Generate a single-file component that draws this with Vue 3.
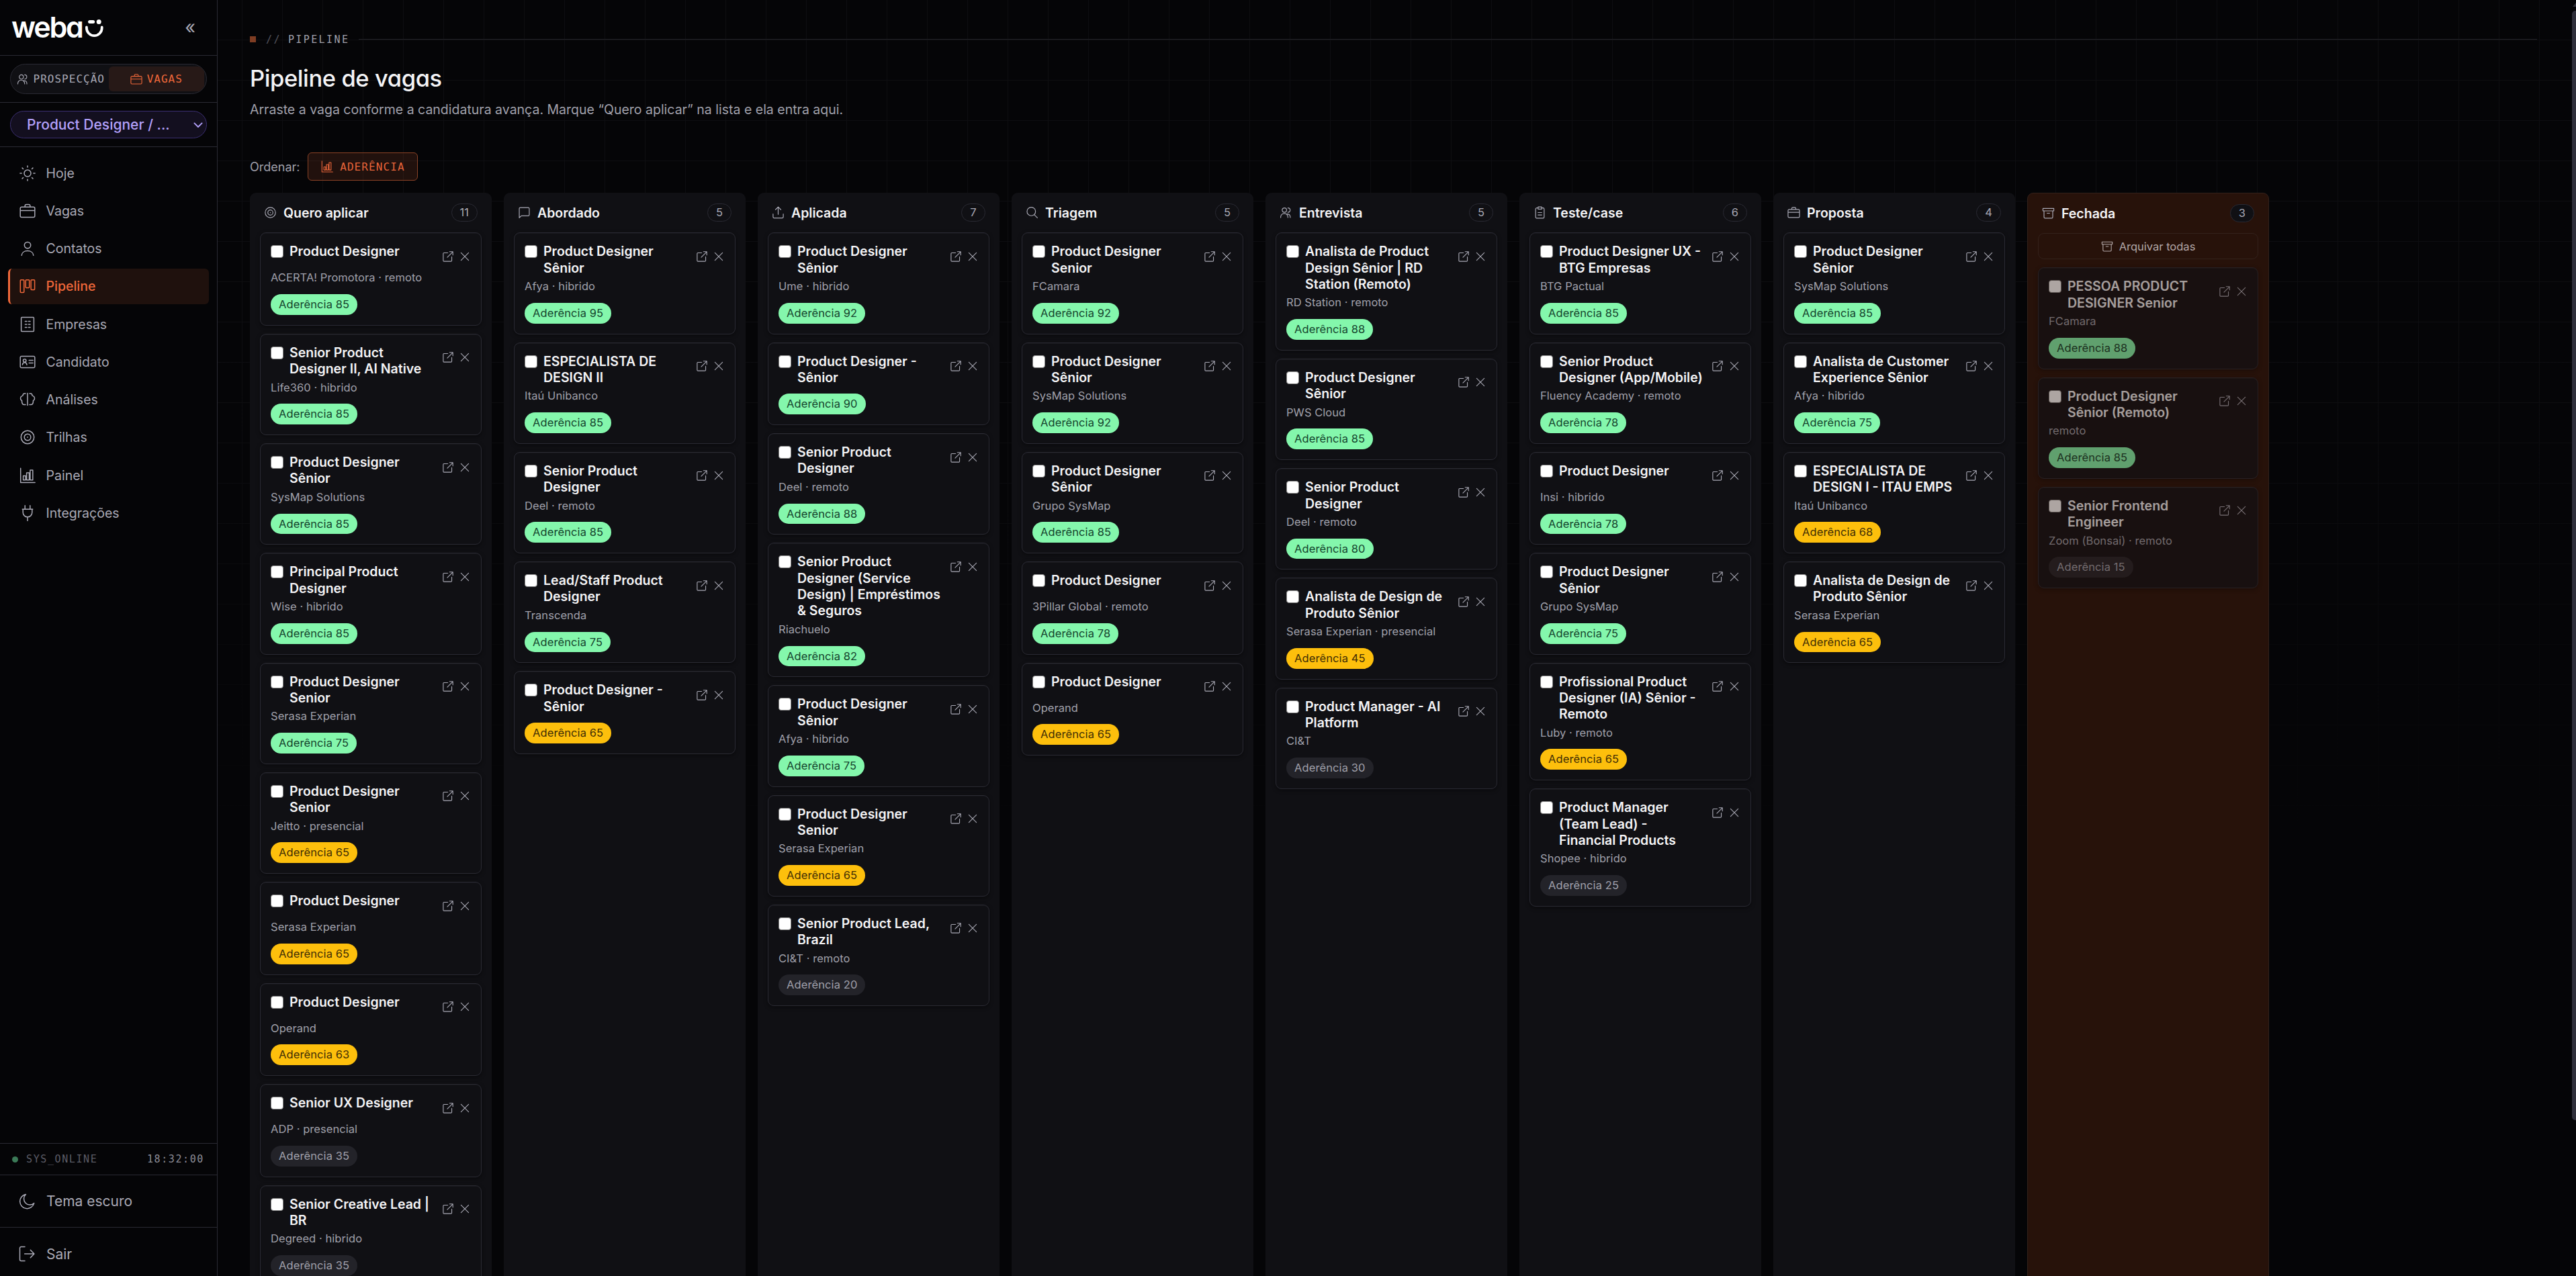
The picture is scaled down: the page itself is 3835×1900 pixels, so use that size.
<script setup>
import { ref } from "vue"

const icons = {
    sun: "M12 7a5 5 0 1 0 0 10 5 5 0 0 0 0-10zM12 .9v2.2M12 20.9v2.2M.9 12h2.2M20.9 12h2.2M4.1 4.1l1.4 1.4M18.5 18.5l1.4 1.4M4.1 19.9l1.4-1.4M18.5 5.5l1.4-1.4",
    briefcase: "M3.2 6.2h17.6a2 2 0 0 1 2 2v11.2a2 2 0 0 1-2 2H3.2a2 2 0 0 1-2-2V8.2a2 2 0 0 1 2-2zM1.2 11.6h21.6M8.2 6.2V4.4a2 2 0 0 1 2-2h3.6a2 2 0 0 1 2 2v1.8",
    user: "M12 2.4a4.7 4.7 0 1 0 0 9.4 4.7 4.7 0 0 0 0-9.4zM3.2 22.2c.3-3.8 3.6-6.6 8.8-6.6s8.5 2.8 8.8 6.6",
    kanban: "M2.3 2.7h3.5a1 1 0 0 1 1 1v16.8a1 1 0 0 1-1 1H2.3a1 1 0 0 1-1-1V3.7a1 1 0 0 1 1-1zM10.2 2.7h3.5a1 1 0 0 1 1 1v9.8a1 1 0 0 1-1 1h-3.5a1 1 0 0 1-1-1V3.7a1 1 0 0 1 1-1zM18.1 2.7h3.5a1 1 0 0 1 1 1v12.8a1 1 0 0 1-1 1h-3.5a1 1 0 0 1-1-1V3.7a1 1 0 0 1 1-1z",
    building: "M3.6 1.4h16.8a1 1 0 0 1 1 1v19.2a1 1 0 0 1-1 1H3.6a1 1 0 0 1-1-1V2.4a1 1 0 0 1 1-1zM8.4 7.6h2.6M13.4 7.6H16M8.4 12.1h2.6M13.4 12.1H16M8.4 16.6h2.6M13.4 16.6H16",
    idcard: "M3 3.4h18a1.8 1.8 0 0 1 1.8 1.8v13.6a1.8 1.8 0 0 1-1.8 1.8H3a1.8 1.8 0 0 1-1.8-1.8V5.2A1.8 1.8 0 0 1 3 3.4zM7.7 7.8a2.2 2.2 0 1 0 0 4.4 2.2 2.2 0 0 0 0-4.4zM4.4 16.2c.3-2.2 1.5-3.4 3.3-3.4s3 1.2 3.3 3.4M14.2 9.6h6M14.2 13.4h6",
    brain: "M12 2.6v18M9 3H7.6C5.9 3 5 4.4 5 6.1 3 6.7 1.5 8 1.5 10.2c0 1.5.7 2.6 2 3.2C3.5 17 4.5 19.6 7 19.6h2M15 3h1.4C18.1 3 19 4.4 19 6.1c2 .6 3.5 1.9 3.5 4.1 0 1.5-.7 2.6-2 3.2 0 3.6-1 6.2-3.5 6.2h-2",
    target: "M12 2.3a9.7 9.7 0 1 0 0 19.4 9.7 9.7 0 0 0 0-19.4zM12 7.2a4.8 4.8 0 1 0 0 9.6 4.8 4.8 0 0 0 0-9.6zM12 11.7v.6",
    chart: "M1.7 1.2v21.4h21.4M5.6 12.6h3.6v6.2H5.6zM10.6 8h3.9v10.8h-3.9zM15.9 4h3.9v14.8h-3.9z",
    plug: "M8.2.8v5.2M15.8.8v5.2M4.3 6.2h15.4M5.2 6.2v4.7c0 4 3 6.9 6.8 6.9s6.8-2.9 6.8-6.9V6.2M12 17.8v5.6",
    moon: "M10.4 1.4A10.7 10.7 0 1 0 22.7 14.6 8.9 8.9 0 0 1 10.4 1.4z",
    logout: "M9 1.5H3.5a2 2 0 0 0-2 2v17a2 2 0 0 0 2 2H9M8.6 12h14M17.3 6.3 22.9 12l-5.6 5.7",
    users: "M9 3.2a4.2 4.2 0 1 0 0 8.4 4.2 4.2 0 0 0 0-8.4zM2 21.4v-.9a6.8 6.8 0 0 1 13.6 0v.9M15.6 3.2a4.2 4.2 0 0 1 0 8.4M13.6 14.6c4 0 6.4 2.6 6.4 5.9v.9",
    chat: "M2.6 21.8V4.6a2 2 0 0 1 2-2h14.8a2 2 0 0 1 2 2v11.6a2 2 0 0 1-2 2H6.5z",
    upload: "M12 15.4V1.8M6.9 6.6 12 1.5l5.1 5.1M2.4 14.5v5.8a2 2 0 0 0 2 2h15.2a2 2 0 0 0 2-2v-5.8",
    search: "M10.5 2a8 8 0 1 0 0 16 8 8 0 0 0 0-16zM16.3 16.3l5.7 5.7",
    clipboard: "M8.5 3.4H6a2 2 0 0 0-2 2v15.2a2 2 0 0 0 2 2h12a2 2 0 0 0 2-2V5.4a2 2 0 0 0-2-2h-2.5M8.7 1.4h6.6v4.2H8.7zM8.5 12h7M8.5 16.5h7",
    archive: "M1.8 3h20.4v4.6H1.8zM3.8 7.6v11.8a2 2 0 0 0 2 2h12.4a2 2 0 0 0 2-2V7.6M9.6 12h4.8",
    external: "M11.5 4.6H4a1.5 1.5 0 0 0-1.5 1.5V20A1.5 1.5 0 0 0 4 21.5h13.9a1.5 1.5 0 0 0 1.5-1.5v-7.5M15 2.4h6.6V9M21.3 2.7 10.6 13.4",
    close: "M4.5 4.5l15 15M19.5 4.5l-15 15",
    chevron: "M4.5 8.5l7.5 7.5 7.5-7.5",
}

const nav = [
    { label: "Hoje", icon: "sun" },
    { label: "Vagas", icon: "briefcase" },
    { label: "Contatos", icon: "user" },
    { label: "Pipeline", icon: "kanban" },
    { label: "Empresas", icon: "building" },
    { label: "Candidato", icon: "idcard" },
    { label: "Análises", icon: "brain" },
    { label: "Trilhas", icon: "target" },
    { label: "Painel", icon: "chart" },
    { label: "Integrações", icon: "plug" },
]

const active = ref("Pipeline")

const job = (title, meta, score) => ({ title, meta, score })

const columns = ref([
    {
        name: "Quero aplicar", icon: "target", total: 11,
        jobs: [
            job("Product Designer", "ACERTA! Promotora · remoto", 85),
            job("Senior Product Designer II, AI Native", "Life360 · hibrido", 85),
            job("Product Designer Sênior", "SysMap Solutions", 85),
            job("Principal Product Designer", "Wise · hibrido", 85),
            job("Product Designer Senior", "Serasa Experian", 75),
            job("Product Designer Senior", "Jeitto · presencial", 65),
            job("Product Designer", "Serasa Experian", 65),
            job("Product Designer", "Operand", 63),
            job("Senior UX Designer", "ADP · presencial", 35),
            job("Senior Creative Lead | BR", "Degreed · hibrido", 35),
        ],
    },
    {
        name: "Abordado", icon: "chat", total: 5,
        jobs: [
            job("Product Designer Sênior", "Afya · hibrido", 95),
            job("ESPECIALISTA DE DESIGN II", "Itaú Unibanco", 85),
            job("Senior Product Designer", "Deel · remoto", 85),
            job("Lead/Staff Product Designer", "Transcenda", 75),
            job("Product Designer - Sênior", "", 65),
        ],
    },
    {
        name: "Aplicada", icon: "upload", total: 7,
        jobs: [
            job("Product Designer Sênior", "Ume · hibrido", 92),
            job("Product Designer - Sênior", "", 90),
            job("Senior Product Designer", "Deel · remoto", 88),
            job("Senior Product Designer (Service Design) | Empréstimos & Seguros", "Riachuelo", 82),
            job("Product Designer Sênior", "Afya · hibrido", 75),
            job("Product Designer Senior", "Serasa Experian", 65),
            job("Senior Product Lead, Brazil", "CI&T · remoto", 20),
        ],
    },
    {
        name: "Triagem", icon: "search", total: 5,
        jobs: [
            job("Product Designer Senior", "FCamara", 92),
            job("Product Designer Sênior", "SysMap Solutions", 92),
            job("Product Designer Sênior", "Grupo SysMap", 85),
            job("Product Designer", "3Pillar Global · remoto", 78),
            job("Product Designer", "Operand", 65),
        ],
    },
    {
        name: "Entrevista", icon: "users", total: 5,
        jobs: [
            job("Analista de Product Design Sênior | RD Station (Remoto)", "RD Station · remoto", 88),
            job("Product Designer Sênior", "PWS Cloud", 85),
            job("Senior Product Designer", "Deel · remoto", 80),
            job("Analista de Design de Produto Sênior", "Serasa Experian · presencial", 45),
            job("Product Manager - AI Platform", "CI&T", 30),
        ],
    },
    {
        name: "Teste/case", icon: "clipboard", total: 6,
        jobs: [
            job("Product Designer UX - BTG Empresas", "BTG Pactual", 85),
            job("Senior Product Designer (App/Mobile)", "Fluency Academy · remoto", 78),
            job("Product Designer", "Insi · hibrido", 78),
            job("Product Designer Sênior", "Grupo SysMap", 75),
            job("Profissional Product Designer (IA) Sênior - Remoto", "Luby · remoto", 65),
            job("Product Manager (Team Lead) - Financial Products", "Shopee · hibrido", 25),
        ],
    },
    {
        name: "Proposta", icon: "briefcase", total: 4,
        jobs: [
            job("Product Designer Sênior", "SysMap Solutions", 85),
            job("Analista de Customer Experience Sênior", "Afya · hibrido", 75),
            job("ESPECIALISTA DE DESIGN I - ITAU EMPS", "Itaú Unibanco", 68),
            job("Analista de Design de Produto Sênior", "Serasa Experian", 65),
        ],
    },
    {
        name: "Fechada", icon: "archive", total: 3, closed: true,
        jobs: [
            job("PESSOA PRODUCT DESIGNER Senior", "FCamara", 88),
            job("Product Designer Sênior (Remoto)", "remoto", 85),
            job("Senior Frontend Engineer", "Zoom (Bonsai) · remoto", 15),
        ],
    },
])

const scoreClass = (score) => {
    if (score >= 70) return "high"
    if (score >= 40) return "mid"
    return "low"
}

const removeJob = (column, index) => {
    column.jobs.splice(index, 1)
    column.total--
}

const archiveAll = (column) => {
    column.jobs = []
    column.total = 0
}
</script>

<template>
    <div class="app">
        <!-- SIDEBAR -->
        <aside class="sidebar">
            <div class="brand">
                <div class="logo">
                    <span class="logo-text">weba</span>
                    <svg class="logo-smile" viewBox="0 0 27 26">
                        <path d="M1.9 11.5v1.2a11.4 11.4 0 0 0 22.8 0v-1.2" />
                        <path d="M6.6 3.5h5" class="eye" />
                        <circle cx="20.200" cy="3.500" r="3.500" />
                    </svg>
                </div>
                <button class="collapse">«</button>
            </div>

            <div class="block">
                <div class="segment">
                    <button>
                        <svg class="icon" viewBox="0 0 24 24"><path :d="icons.users" /></svg>PROSPECÇÃO
                    </button>
                    <button class="on">
                        <svg class="icon" viewBox="0 0 24 24"><path :d="icons.briefcase" /></svg>VAGAS
                    </button>
                </div>
            </div>

            <div class="block">
                <div class="profile">
                    <span>Product Designer / ...</span>
                    <svg class="icon" viewBox="0 0 24 24"><path :d="icons.chevron" /></svg>
                </div>
            </div>

            <nav class="nav">
                <a
                    v-for="item in nav"
                    :key="item.label"
                    :class="{ active: item.label === active }"
                    @click="active = item.label"
                >
                    <svg class="icon" viewBox="0 0 24 24"><path :d="icons[item.icon]" /></svg>
                    {{ item.label }}
                </a>
            </nav>

            <div class="status">
                <i class="dot"></i>
                <span>SYS_ONLINE</span>
                <time>18:32:00</time>
            </div>
            <div class="foot theme">
                <svg class="icon" viewBox="0 0 24 24"><path :d="icons.moon" /></svg>Tema escuro
            </div>
            <div class="foot exit">
                <svg class="icon" viewBox="0 0 24 24"><path :d="icons.logout" /></svg>Sair
            </div>
        </aside>

        <!-- CONTENT -->
        <main class="main">
            <div class="crumb">
                <i></i><span class="slashes">//</span><span>PIPELINE</span><hr />
            </div>
            <h1>Pipeline de vagas</h1>
            <p class="lead">Arraste a vaga conforme a candidatura avança. Marque “Quero aplicar” na lista e ela entra aqui.</p>

            <div class="toolbar">
                <span>Ordenar:</span>
                <button class="sort">
                    <svg class="icon" viewBox="0 0 24 24"><path :d="icons.chart" /></svg>ADERÊNCIA
                </button>
            </div>

            <div class="board">
                <section v-for="column in columns" :key="column.name" class="column" :class="{ closed: column.closed }">
                    <header>
                        <svg class="icon" viewBox="0 0 24 24"><path :d="icons[column.icon]" /></svg>
                        <h2>{{ column.name }}</h2>
                        <span class="count">{{ column.total }}</span>
                    </header>

                    <button v-if="column.closed" class="archive" @click="archiveAll(column)">
                        <svg class="icon" viewBox="0 0 24 24"><path :d="icons.archive" /></svg>Arquivar todas
                    </button>

                    <article v-for="(item, i) in column.jobs" :key="i" class="card">
                        <div class="card-top">
                            <input type="checkbox" />
                            <h3>{{ item.title }}</h3>
                            <div class="actions">
                                <svg class="icon" viewBox="0 0 24 24"><path :d="icons.external" /></svg>
                                <svg class="icon" viewBox="0 0 24 24" @click="removeJob(column, i)"><path :d="icons.close" /></svg>
                            </div>
                        </div>
                        <p v-if="item.meta" class="meta">{{ item.meta }}</p>
                        <span class="score" :class="scoreClass(item.score)">Aderência {{ item.score }}</span>
                    </article>
                </section>
            </div>
        </main>

        <div class="scrollbar"><i></i><b></b></div>
    </div>
</template>

<style>
html,
body {
    background: #050507;
    overflow: hidden;
}
</style>

<style scoped>
* {
    box-sizing: border-box;
}

.app {
    position: relative;
    display: flex;
    height: 1900px;
    overflow: hidden;
    background: #050507;
    color: #f4f4f6;
    font-family: Inter, sans-serif;
    font-size: 19.5px;
}

button {
    font: inherit;
    letter-spacing: inherit;
    color: inherit;
    background: none;
    border: 0;
    padding: 0;
    cursor: pointer;
}

.icon {
    width: 24px;
    height: 24px;
    flex: none;
    fill: none;
    stroke: currentColor;
    stroke-width: 1.5;
    stroke-linecap: round;
    stroke-linejoin: round;
}

/* SIDEBAR */
.sidebar {
    width: 324px;
    flex: none;
    display: flex;
    flex-direction: column;
    border-right: 1px solid #2a2a33;
    color: #a9a9b5;
}

.brand {
    height: 83px;
    padding: 0 32px 0 17px;
    display: flex;
    align-items: center;
    justify-content: space-between;
    border-bottom: 1px solid #2a2a33;
}

.logo {
    display: flex;
    align-items: flex-end;
    color: #fff;
}

.logo-text {
    font-size: 43px;
    line-height: 42px;
    height: 44px;
    font-weight: 600;
    letter-spacing: -2.2px;
    font-feature-settings: "cv11";
}

.logo-smile {
    width: 27px;
    height: 26px;
    margin: 0 0 8px 4px;
    fill: none;
    stroke: #fff;
    stroke-width: 3.8;
    stroke-linecap: round;
}

.logo-smile circle {
    fill: #fff;
    stroke: none;
}

.logo-smile .eye {
    stroke-width: 5;
}

.collapse {
    font-size: 27px;
    line-height: 24px;
}

.block {
    padding: 12px 15px;
    border-bottom: 1px solid #2a2a33;
}

.segment {
    height: 45px;
    padding: 3px;
    display: flex;
    border: 1px solid #2a2a33;
    border-radius: 23px;
    background: #101014;
    font-family: "DejaVu Sans Mono", monospace;
    font-size: 16px;
    letter-spacing: 1px;
    overflow: hidden;
}

.segment button {
    flex: 1 1 0;
    display: flex;
    align-items: center;
    justify-content: center;
    gap: 7px;
    border-radius: 6px;
}

.segment .icon {
    width: 18px;
    height: 18px;
}

.segment .on {
    background: #271917;
    color: #f0683a;
}

.profile {
    height: 41px;
    padding: 0 3px 0 24px;
    display: flex;
    align-items: center;
    justify-content: space-between;
    border: 1px solid #3b2f72;
    border-radius: 21px;
    background: #130f1f;
    color: #b3a1fb;
    font-size: 21px;
    font-weight: 500;
}

.profile .icon {
    width: 18px;
    height: 18px;
    stroke-width: 2.4;
}

.nav {
    flex: 1;
    padding: 12px;
    display: flex;
    flex-direction: column;
    gap: 3px;
}

.nav a {
    height: 53.25px;
    padding-left: 13.5px;
    display: flex;
    align-items: center;
    gap: 16px;
    border-left: 3px solid transparent;
    border-radius: 6px;
    cursor: pointer;
}

.nav a.active {
    background: #1f110d;
    border-left-color: #f0683a;
    color: #f0683a;
    font-weight: 500;
}

.status {
    height: 47px;
    padding: 0 19px 0 18px;
    display: flex;
    align-items: center;
    border-top: 1px solid #2a2a33;
    font-family: "DejaVu Sans Mono", monospace;
    font-size: 15px;
    letter-spacing: 1.6px;
    color: #5c5c66;
}

.status .dot {
    width: 9px;
    height: 9px;
    margin-right: 12px;
    border-radius: 50%;
    background: #3b7a57;
}

.status time {
    margin-left: auto;
    color: #8b8b95;
}

.foot {
    padding-left: 28px;
    display: flex;
    align-items: center;
    gap: 17px;
    border-top: 1px solid #2a2a33;
    font-size: 21px;
}

.theme {
    height: 78px;
}

.exit {
    height: 73px;
    padding-top: 6px;
}

/* CONTENT */
.main {
    flex: 1;
    padding: 48px 58px 0 48px;
    /* grid fades out towards the bottom of the page */
    background-image:
        linear-gradient(rgba(5, 5, 7, 0) 500px, #050507 1250px),
        linear-gradient(#0e0e11 1px, transparent 1px),
        linear-gradient(90deg, #0e0e11 1px, transparent 1px);
    background-size: 100% 100%, 60px 60px, 60px 60px;
    background-position: 0 0, 0 -1px, 36px 0;
}

.crumb {
    height: 21px;
    display: flex;
    align-items: center;
    font-family: "DejaVu Sans Mono", monospace;
    font-size: 15px;
    letter-spacing: 2.4px;
    color: #a0a0ab;
}

.crumb i {
    width: 9px;
    height: 9px;
    margin-right: 15px;
    background: #7f3d23;
}

.crumb .slashes {
    margin-right: 10px;
    color: #55555f;
}

.crumb hr {
    flex: 1;
    height: 1px;
    margin: 0 0 0 14px;
    border: 0;
    background: #232328;
}

h1 {
    margin: 24px 0 0;
    font-size: 34.5px;
    line-height: 48px;
    font-weight: 500;
    letter-spacing: -0.4px;
    font-feature-settings: "cv11";
}

.lead {
    margin: 8px 0 0;
    line-height: 28px;
    color: #a0a0ab;
}

.toolbar {
    margin: 50px 0 18px;
    height: 42px;
    display: flex;
    align-items: center;
    gap: 12px;
    font-size: 18px;
    color: #a0a0ab;
}

.sort {
    width: 164px;
    height: 42px;
    display: flex;
    align-items: center;
    justify-content: center;
    gap: 10px;
    border: 1px solid #8a4226;
    border-radius: 6px;
    background: rgba(240, 104, 58, 0.12);
    color: #e8653a;
    font-family: "DejaVu Sans Mono", monospace;
    font-size: 16px;
    letter-spacing: 1.1px;
}

.sort .icon {
    width: 18px;
    height: 18px;
}

.board {
    display: flex;
    align-items: stretch;
    gap: 18px;
}

.column {
    width: 360px;
    flex: none;
    padding: 15px;
    display: flex;
    flex-direction: column;
    gap: 12px;
    border-radius: 9px;
    background: #101014;
}

.column.closed {
    background: #27120a;
    border: 1px solid #33211b;
}

.column header {
    height: 29.25px;
    margin-bottom: 3px;
    padding: 0 6px;
    display: flex;
    align-items: center;
    gap: 10px;
}

.column header .icon {
    width: 19px;
    height: 19px;
    color: #a9a9b5;
}

h2,
h3 {
    margin: 0;
    font-size: 19.5px;
    font-weight: 600;
}

.count {
    height: 27px;
    min-width: 36px;
    margin-left: auto;
    padding: 0 12px;
    border: 1px solid #2a2a33;
    border-radius: 14px;
    background: #101014;
    color: #a9a9b5;
    font-size: 16.5px;
    line-height: 25px;
    text-align: center;
}

.archive {
    height: 39px;
    display: flex;
    align-items: center;
    justify-content: center;
    gap: 9px;
    border: 1px solid #33211b;
    border-radius: 9px;
    color: #b3a8a8;
    font-size: 16.5px;
}

.archive .icon {
    width: 18px;
    height: 18px;
}

/* CARD */
.card {
    padding: 15px;
    border: 1px solid #2a2a33;
    border-radius: 9px;
    background: #101014;
    box-shadow: 0 2px 6px rgba(0, 0, 0, 0.45), inset 0 1px 0 rgba(255, 255, 255, 0.03);
}

.closed .card {
    opacity: 0.62;
}

.card-top {
    display: flex;
    align-items: flex-start;
    min-height: 36px;
}

.card input {
    appearance: none;
    width: 19px;
    height: 19px;
    flex: none;
    margin: 3px 9px 0 0;
    border: 1.5px solid #858585;
    border-radius: 4px;
    background: #fff;
}

h3 {
    flex: 1;
    line-height: 24.375px;
}

.actions {
    height: 36px;
    margin-left: 10px;
    padding: 3px 0 0;
    display: flex;
    align-items: center;
    gap: 7px;
    color: #a9a9b5;
}

.actions .icon {
    width: 18px;
    height: 18px;
}

.meta {
    margin: 3px 0 0;
    font-size: 16.5px;
    line-height: 24.75px;
    letter-spacing: 0.05px;
    color: #a0a0ab;
}

.score {
    display: block;
    width: fit-content;
    height: 30.75px;
    margin-top: 12px;
    padding: 3px 12px;
    border-radius: 16px;
    font-size: 16.5px;
    line-height: 24.75px;
    letter-spacing: 0.1px;
}

.high {
    background: #84f7ac;
    color: #14432d;
}

.mid {
    background: #fdbf0c;
    color: #3f2d05;
}

.low {
    background: #232329;
    color: #a0a0ab;
}

/* SCROLLBAR */
.scrollbar {
    position: absolute;
    right: 0;
    top: 0;
    width: 6px;
    height: 100%;
    overflow: hidden;
}

.scrollbar i {
    position: absolute;
    top: 4px;
    left: 1px;
    border: 5px solid transparent;
    border-top: 0;
    border-bottom: 6px solid #2f2f3a;
}

.scrollbar b {
    position: absolute;
    top: 16px;
    left: 0;
    width: 12px;
    height: 1652px;
    border-radius: 5px;
    background: #2f2f3a;
}
</style>
